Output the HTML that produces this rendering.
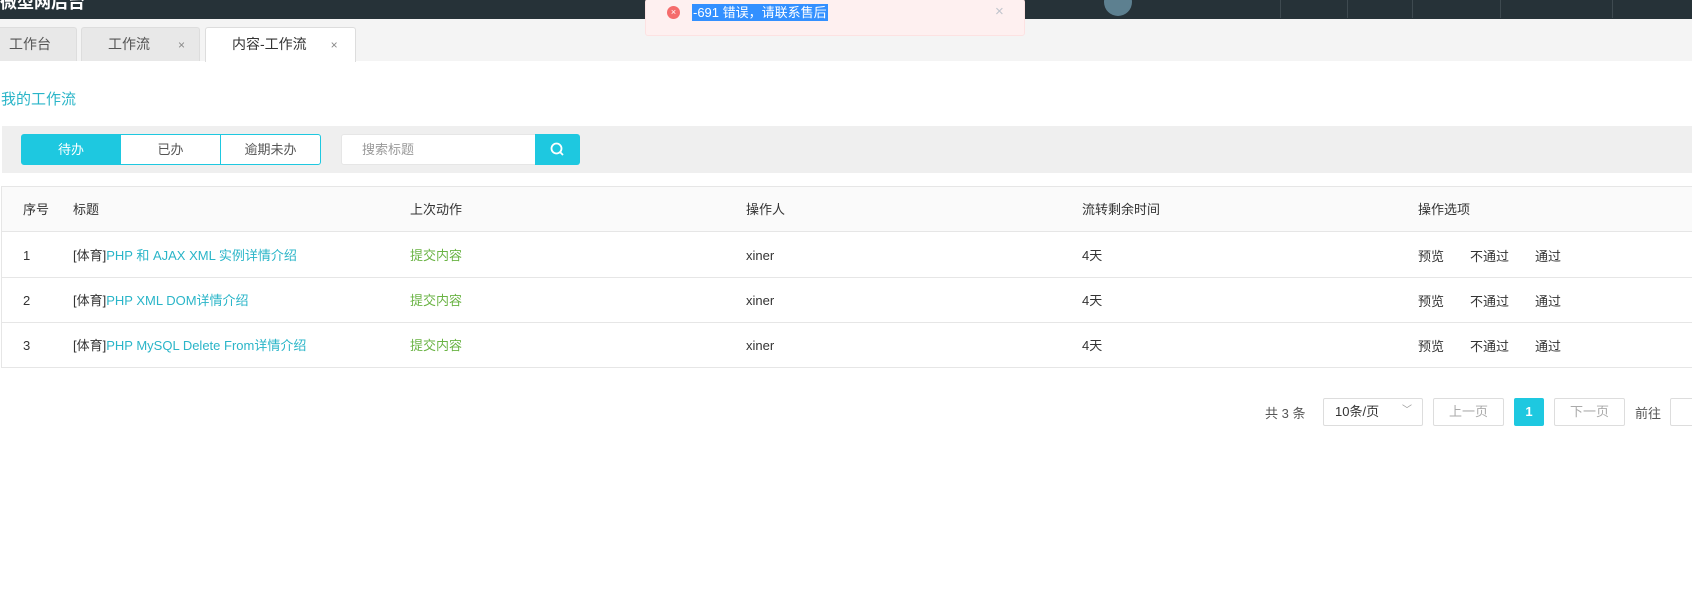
<!DOCTYPE html>
<html><head><meta charset="utf-8"><style>
*{box-sizing:border-box;margin:0;padding:0}
body{width:1692px;height:612px;overflow:hidden;background:#fff;font-family:"Liberation Sans","Noto Sans CJK SC",sans-serif;font-size:14px;color:#333;position:relative}
.abs{position:absolute}
.top{left:0;top:0;width:1692px;height:19px;background:#263238}
.tabbar{left:0;top:19px;width:1692px;height:42px;background:#f4f4f4}
.tab{top:27px;height:34px;background:#e8e8e8;border:1px solid #ddd;border-bottom:none;border-radius:3px 3px 0 0;line-height:32px;color:#555}
.x{color:#888;font-size:12px}
.cell{position:absolute;line-height:45px;font-size:13px}
.btn{top:134px;height:31px;line-height:29px;text-align:center;font-size:13px;border:1px solid #1ec8e0}
.pg{top:398px;height:28px;line-height:26px;border:1px solid #ddd;border-radius:2px;text-align:center;font-size:13px;color:#aaa}
</style></head><body>
<div class="abs top">
 <div class="abs" style="left:0;top:-12px;color:#fff;font-weight:bold;font-size:17px">微型网后台</div>
 <div class="abs" style="left:1104px;top:-12px;width:28px;height:28px;border-radius:50%;background:#5d8090"></div>
 <div class="abs" style="left:1280px;top:0;width:1px;height:18px;background:#3e4a50"></div>
 <div class="abs" style="left:1347px;top:0;width:1px;height:18px;background:#3e4a50"></div>
 <div class="abs" style="left:1412px;top:0;width:1px;height:18px;background:#3e4a50"></div>
 <div class="abs" style="left:1500px;top:0;width:1px;height:18px;background:#3e4a50"></div>
 <div class="abs" style="left:1612px;top:0;width:1px;height:18px;background:#3e4a50"></div>
</div>
<div class="abs tabbar"></div>
<div class="abs tab" style="left:-4px;width:81px;padding-left:12px">工作台</div>
<div class="abs tab" style="left:81px;width:119px;padding-left:26px">工作流<span class="x" style="margin-left:28px">×</span></div>
<div class="abs tab" style="left:205px;width:151px;height:35px;background:#fff;padding-left:26px;color:#333">内容-工作流<span class="x" style="margin-left:24px">×</span></div>

<div class="abs" style="left:1px;top:88px;color:#2ab5c8;font-size:15px">我的工作流</div>

<div class="abs" style="left:2px;top:126px;width:1690px;height:47px;background:#efefef"></div>
<div class="abs btn" style="left:21px;width:100px;background:#1ec8e0;color:#fff;border-radius:3px 0 0 3px">待办</div>
<div class="abs btn" style="left:120px;width:101px;background:#fff;color:#555">已办</div>
<div class="abs btn" style="left:220px;width:101px;background:#fff;color:#555;border-radius:0 3px 3px 0">逾期未办</div>
<div class="abs" style="left:341px;top:134px;width:195px;height:31px;background:#fff;border:1px solid #e6e6e6;border-radius:3px 0 0 3px;line-height:29px;padding-left:20px;color:#999;font-size:13px">搜索标题</div>
<div class="abs" style="left:535px;top:134px;width:45px;height:31px;background:#1ec8e0;border-radius:0 3px 3px 0">
<svg width="45" height="31"><circle cx="21.5" cy="14.5" r="5" fill="none" stroke="#fff" stroke-width="1.8"/><line x1="25" y1="18" x2="28" y2="21" stroke="#fff" stroke-width="1.8"/></svg></div>

<div class="abs" style="left:1px;top:186px;width:1692px;height:182px;border:1px solid #e6e6e6">
 <div class="abs" style="left:0;top:0;width:1692px;height:45px;background:#fafafa;border-bottom:1px solid #e6e6e6"></div>
 <div class="abs" style="left:0;top:90px;width:1692px;height:1px;background:#e6e6e6"></div>
 <div class="abs" style="left:0;top:135px;width:1692px;height:1px;background:#e6e6e6"></div>
 <div class="cell" style="left:21px;top:0">序号</div><div class="cell" style="left:71px;top:0">标题</div><div class="cell" style="left:408px;top:0">上次动作</div><div class="cell" style="left:744px;top:0">操作人</div><div class="cell" style="left:1080px;top:0">流转剩余时间</div><div class="cell" style="left:1416px;top:0">操作选项</div>

 <div class="cell" style="left:21px;top:46px">1</div><div class="cell" style="left:71px;top:46px">[体育]<span style="color:#2ab5c8">PHP 和 AJAX XML 实例详情介绍</span></div><div class="cell" style="left:408px;top:46px;color:#6ab344">提交内容</div><div class="cell" style="left:744px;top:46px">xiner</div><div class="cell" style="left:1080px;top:46px">4天</div><div class="cell" style="left:1416px;top:47px">预览</div><div class="cell" style="left:1468px;top:47px">不通过</div><div class="cell" style="left:1533px;top:47px">通过</div>

 <div class="cell" style="left:21px;top:91px">2</div><div class="cell" style="left:71px;top:91px">[体育]<span style="color:#2ab5c8">PHP XML DOM详情介绍</span></div><div class="cell" style="left:408px;top:91px;color:#6ab344">提交内容</div><div class="cell" style="left:744px;top:91px">xiner</div><div class="cell" style="left:1080px;top:91px">4天</div><div class="cell" style="left:1416px;top:92px">预览</div><div class="cell" style="left:1468px;top:92px">不通过</div><div class="cell" style="left:1533px;top:92px">通过</div>

 <div class="cell" style="left:21px;top:136px">3</div><div class="cell" style="left:71px;top:136px">[体育]<span style="color:#2ab5c8">PHP MySQL Delete From详情介绍</span></div><div class="cell" style="left:408px;top:136px;color:#6ab344">提交内容</div><div class="cell" style="left:744px;top:136px">xiner</div><div class="cell" style="left:1080px;top:136px">4天</div><div class="cell" style="left:1416px;top:137px">预览</div><div class="cell" style="left:1468px;top:137px">不通过</div><div class="cell" style="left:1533px;top:137px">通过</div>
</div>

<div class="abs" style="left:1265px;top:403px;font-size:13px;color:#555">共 3 条</div>
<div class="abs pg" style="left:1323px;width:100px;color:#333;text-align:left;padding-left:11px">10条/页<span style="position:absolute;right:10px;top:-1px;color:#999;font-size:10px">﹀</span></div>
<div class="abs pg" style="left:1433px;width:71px">上一页</div>
<div class="abs pg" style="left:1514px;width:30px;background:#1ec8e0;border-color:#1ec8e0;color:#fff;font-weight:bold">1</div>
<div class="abs pg" style="left:1554px;width:71px">下一页</div>
<div class="abs" style="left:1635px;top:403px;font-size:13px;color:#555">前往</div>
<div class="abs pg" style="left:1670px;width:40px"></div>

<div class="abs" style="left:645px;top:-1px;width:380px;height:37px;background:#fef0f0;border:1px solid #fde2e2;border-radius:3px">
 <div class="abs" style="left:21px;top:6px;width:13px;height:13px;border-radius:50%;background:#f56c6c;color:#fff;font-size:9px;line-height:13px;text-align:center">×</div>
 <div class="abs" style="left:46px;top:4px;background:#3390ff;color:#fff;font-size:13px;line-height:17px;padding:0 1px">-691 错误，请联系售后</div>
 <div class="abs" style="left:349px;top:3px;color:#c0c4cc;font-size:15px">×</div>
</div>
</body></html>
